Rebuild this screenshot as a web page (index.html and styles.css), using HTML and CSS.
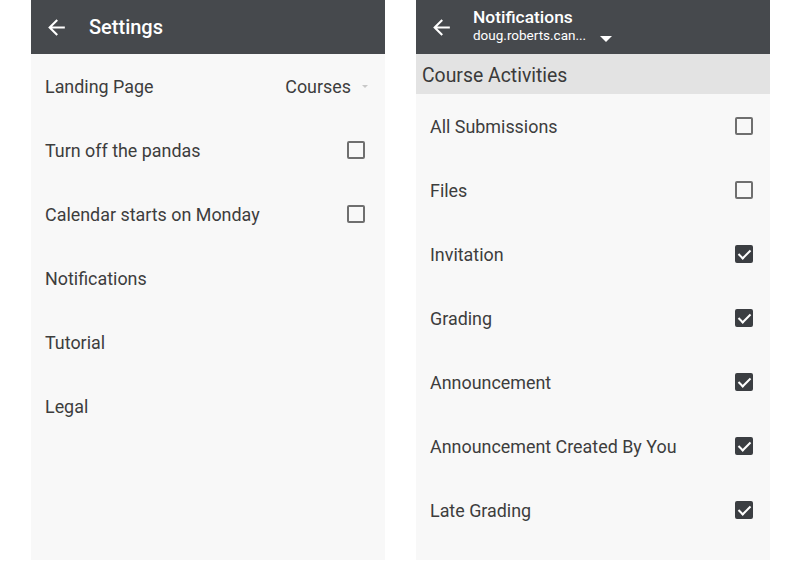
FILE: index.html
```html
<!DOCTYPE html>
<html lang="en">
<head>
    <meta charset="UTF-8">
    <meta name="viewport" content="width=device-width, initial-scale=1.0">
    <title>Settings - Notifications</title>
    <link rel="stylesheet" href="styles.css">
</head>
<body>
    <div class="screens">
        <!-- Ecran Settings -->
        <section class="screen">
            <header class="toolbar">
                <svg class="back" viewBox="0 0 24 24"><path d="M20 11H7.83l5.59-5.59L12 4l-8 8 8 8 1.41-1.41L7.83 13H20v-2z"/></svg>
                <h1>Settings</h1>
            </header>
            <ul class="list left">
                <li>
                    <span>Landing Page</span>
                    <span class="select">Courses <i class="caret-light"></i></span>
                </li>
                <li>
                    <span>Turn off the pandas</span>
                    <span class="check"></span>
                </li>
                <li>
                    <span>Calendar starts on Monday</span>
                    <span class="check"></span>
                </li>
                <li><span>Notifications</span></li>
                <li><span>Tutorial</span></li>
                <li><span>Legal</span></li>
            </ul>
        </section>

        <!-- Ecran Notifications -->
        <section class="screen">
            <header class="toolbar two-line">
                <svg class="back" viewBox="0 0 24 24"><path d="M20 11H7.83l5.59-5.59L12 4l-8 8 8 8 1.41-1.41L7.83 13H20v-2z"/></svg>
                <div class="titles">
                    <h2>Notifications</h2>
                    <div class="account">doug.roberts.can... <i class="caret"></i></div>
                </div>
            </header>
            <div class="section-title">Course Activities</div>
            <ul class="list right">
                <li><span>All Submissions</span><span class="check"></span></li>
                <li><span>Files</span><span class="check"></span></li>
                <li><span>Invitation</span><span class="check checked"></span></li>
                <li><span>Grading</span><span class="check checked"></span></li>
                <li><span>Announcement</span><span class="check checked"></span></li>
                <li><span>Announcement Created By You</span><span class="check checked"></span></li>
                <li><span>Late Grading</span><span class="check checked"></span></li>
            </ul>
        </section>
    </div>
</body>
</html>
```

FILE: styles.css
```css
:root {
    --toolbar: #46494d;
    --panel: #f8f8f8;
    --band: #e3e3e3;
    --text: #3d3d3d;
    --box: #6f6f6f;
    --white: #FFFFFF;
}

* {
    margin: 0;
    padding: 0;
    box-sizing: border-box;
    font-family: 'Roboto', 'Liberation Sans', sans-serif;
}

body {
    background-color: var(--white);
    color: var(--text);
    height: 561px;
    overflow: hidden;
}

.screens {
    display: flex;
    gap: 31px;
    padding-left: 31px;
    height: 561px;
}

.screen {
    width: 354px;
    height: 560px;
    background-color: var(--panel);
}

.toolbar {
    height: 54px;
    background-color: var(--toolbar);
    color: var(--white);
    display: flex;
    align-items: center;
    padding-left: 13px;
}

.back {
    width: 25px;
    height: 25px;
    fill: var(--white);
    flex-shrink: 0;
}

.toolbar h1 {
    font-size: 20px;
    font-weight: 500;
    margin-left: 20px;
}

.two-line .back {
    margin-top: 1px;
}

.titles {
    margin-left: 19px;
    margin-top: -3px;
}

.titles h2 {
    font-size: 17.4px;
    font-weight: 500;
    line-height: 20px;
}

.account {
    font-size: 13.5px;
    line-height: 17px;
    display: flex;
    align-items: center;
}

.caret {
    display: inline-block;
    width: 0;
    height: 0;
    border-left: 6px solid transparent;
    border-right: 6px solid transparent;
    border-top: 6px solid var(--white);
    margin-left: 14px;
    margin-top: 6px;
}

.section-title {
    height: 40px;
    background-color: var(--band);
    font-size: 19.4px;
    line-height: 43px;
    padding-left: 6px;
    color: #3a3a3a;
}

.list {
    list-style: none;
}

.list li {
    height: 64px;
    display: flex;
    align-items: center;
    justify-content: space-between;
    font-size: 17.9px;
    padding-top: 1px;
    padding-right: 20px;
}

.left li {
    padding-left: 14px;
}

.right li {
    padding-left: 14px;
    padding-right: 17px;
}

.select {
    display: flex;
    align-items: center;
    margin-right: -3px;
}

.caret-light {
    display: inline-block;
    width: 0;
    height: 0;
    border-left: 3px solid transparent;
    border-right: 3px solid transparent;
    border-top: 3px solid #c8c8c8;
    margin-left: 11px;
    margin-top: -1px;
}

.check {
    width: 18px;
    height: 18px;
    border: 2px solid var(--box);
    border-radius: 2px;
    position: relative;
    margin-top: -1px;
}

.check.checked {
    background-color: #3b3e42;
    border-color: #3b3e42;
}

.check.checked::after {
    content: '';
    position: absolute;
    left: 4px;
    top: 0px;
    width: 5px;
    height: 10px;
    border-right: 2px solid var(--white);
    border-bottom: 2px solid var(--white);
    transform: rotate(45deg);
}
```
